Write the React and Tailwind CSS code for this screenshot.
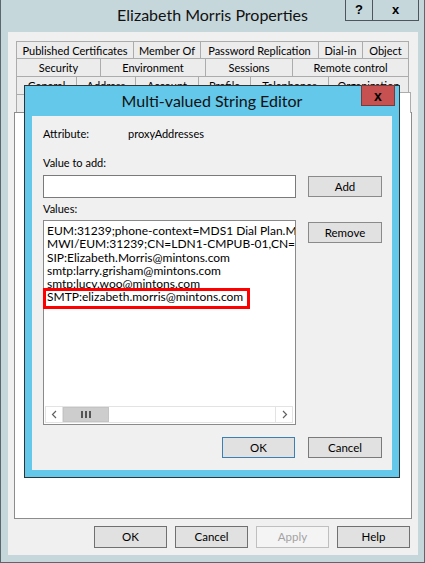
import React from 'react';

const tabRows = [
  {
    h: 'h-[17px]',
    tabs: [
      ['Published Certificates', 'w-[117px]'],
      ['Member Of', 'w-[67px]'],
      ['Password Replication', 'w-[118px]'],
      ['Dial-in', 'w-[44px]'],
      ['Object', 'w-[47px] border-r'],
    ],
  },
  {
    h: 'h-[18px]',
    tabs: [
      ['Security', 'w-[84px]'],
      ['Environment', 'w-[105px]'],
      ['Sessions', 'w-[87px]'],
      ['Remote control', 'w-[117px] border-r'],
    ],
  },
  {
    h: 'h-[18px]',
    tabs: [
      ['General', 'w-[60px]'],
      ['Address', 'w-[59px]'],
      ['Account', 'w-[63px]'],
      ['Profile', 'w-[52px]'],
      ['Telephones', 'w-[78px]'],
      ['Organization', 'w-[81px] border-r'],
    ],
  },
];

const values = [
  'EUM:31239;phone-context=MDS1 Dial Plan.Mintons.com',
  'MWI/EUM:31239;CN=LDN1-CMPUB-01,CN=UM IP Gateway Container',
  'SIP:Elizabeth.Morris@mintons.com',
  'smtp:larry.grisham@mintons.com',
  'smtp:lucy.woo@mintons.com',
];

const Btn = ({ children, className = '' }) => (
  <button
    type="button"
    className={`flex items-center justify-center border bg-[#e1e1e1] text-[11.5px] leading-none text-black ${className}`}
  >
    {children}
  </button>
);

const Chevron = ({ left }) => (
  <svg width="7" height="9" viewBox="0 0 7 9">
    <polyline
      points={left ? '5,1 1.5,4.5 5,8' : '2,1 5.5,4.5 2,8'}
      fill="none"
      stroke="#606060"
      strokeWidth="1.2"
    />
  </svg>
);

const Scrollbar = () => (
  <div className="ml-[1px] mr-[2px] mb-[1px] flex h-[17px] border border-[#e3e3e3] bg-white">
    <div className="flex w-[17px] items-center justify-center border-r border-[#e3e3e3]">
      <Chevron left />
    </div>
    <div className="flex w-[46px] items-center justify-center gap-[2px] border border-[#c4c4c4] bg-[#cdcdcd]">
      <span className="h-[7px] w-[2px] bg-[#555]" />
      <span className="h-[7px] w-[2px] bg-[#555]" />
      <span className="h-[7px] w-[2px] bg-[#555]" />
    </div>
    <div className="flex-1" />
    <div className="flex w-[17px] items-center justify-center border-l border-[#e3e3e3]">
      <Chevron />
    </div>
  </div>
);

const StringEditor = () => (
  <div className="absolute left-[23px] top-[85px] z-20 flex h-[393px] w-[376px] flex-col border border-[#2f3437] bg-[#64c8eb]">
    <div className="grid h-[30px] grid-cols-[1fr_auto_1fr]">
      <div />
      <div className="self-center pb-[1px] text-[16px] leading-none text-[#111]">Multi-valued String Editor</div>
      <div className="flex justify-end">
        <button
          type="button"
          className="-mt-[1px] mr-[4px] flex h-[21px] w-[34px] items-center justify-center border border-[#7a3a38] bg-[#c75050] font-['Liberation_Sans',sans-serif] text-[14px] font-bold leading-none text-black"
        >
          x
        </button>
      </div>
    </div>

    <div className="mx-[7px] flex h-[354px] flex-col bg-[#f0f0f0] pl-[11px] text-[11px] text-black">
      <div className="mt-[10px] flex h-[16px] items-center">
        <span className="w-[85px]">Attribute:</span>
        <span>proxyAddresses</span>
      </div>
      <div className="mt-[13px] flex h-[16px] items-center">Value to add:</div>
      <div className="mt-[4px] flex items-start">
        <div className="h-[23px] w-[253px] border border-[#7a7a7a] bg-white" />
        <Btn className="ml-[12px] mt-[1px] h-[21px] w-[74px] border-[#8a8a8a]">Add</Btn>
      </div>
      <div className="mt-[3px] flex h-[16px] items-center">Values:</div>
      <div className="mt-[3px] flex items-start">
        <div className="relative flex h-[205px] w-[253px] flex-col border border-[#8a8a8a] bg-white">
          <div className="flex-1 overflow-hidden pl-[3px] pt-[3px] text-[12px] leading-[13.3px] whitespace-nowrap">
            {values.map((v) => (
              <div key={v}>{v}</div>
            ))}
            <div>SMTP:elizabeth.morris@mintons.com</div>
          </div>
          <Scrollbar />
          <div className="pointer-events-none absolute -left-[1px] top-[67px] h-[21px] w-[207px] border-[3px] border-[#ff0000]" />
        </div>
        <Btn className="ml-[12px] mt-[2px] h-[21px] w-[74px] border-[#8a8a8a]">Remove</Btn>
      </div>
      <div className="mt-[12px] flex justify-end gap-[13px] pr-[10px]">
        <Btn className="h-[21px] w-[73px] border-[#3c7fb1]">OK</Btn>
        <Btn className="h-[21px] w-[74px] border-[#7a7a7a]">Cancel</Btn>
      </div>
    </div>
  </div>
);

export default function App() {
  return (
    <div className="relative flex h-[563px] w-[425px] flex-col border-x border-b border-[#5b666d] bg-[#c6d7dc] font-['Lato',sans-serif]">
      {/* title bar */}
      <div className="grid h-[32px] grid-cols-[1fr_auto_1fr]">
        <div />
        <div className="self-center pb-[2px] text-[16px] leading-none text-[#111]">Elizabeth Morris Properties</div>
        <div className="flex justify-end pr-[5px]">
          <div className="flex h-[21px] border-x border-b border-[#4c565c] font-['Liberation_Sans',sans-serif] text-[13px] font-bold text-black">
            <div className="flex w-[26px] items-center justify-center">?</div>
            <div className="flex w-[46px] items-center justify-center border-l border-[#4c565c]">x</div>
          </div>
        </div>
      </div>

      {/* client area */}
      <div className="ml-[7px] mr-[6px] flex h-[523px] flex-col bg-[#f0f0f0] pt-[9px] text-[11px] text-black">
        <div className="ml-[8px] flex flex-col">
          {tabRows.map((row, i) => (
            <div key={i} className={`flex ${row.h}`}>
              {row.tabs.map(([label, w]) => (
                <div
                  key={label}
                  className={`flex items-center justify-center whitespace-nowrap border-l border-t border-[#acacac] bg-[#ececec] leading-none ${w}`}
                >
                  {label}
                </div>
              ))}
            </div>
          ))}
          <div className="flex h-[18px] items-end">
            <div className="flex h-full w-[174px] items-center justify-center whitespace-nowrap border-l border-t border-[#acacac] bg-[#ececec]">
              Remote Desktop Services Profile
            </div>
            <div className="flex h-full w-[60px] items-center justify-center border-l border-t border-[#acacac] bg-[#ececec]">
              COM+
            </div>
            <div className="relative z-10 -ml-[2px] -mb-[1px] flex h-[21px] w-[163px] items-center justify-center self-end border-x border-t border-[#acacac] bg-white">
              Attribute Editor
            </div>
          </div>
        </div>

        <div className="ml-[6px] h-[407px] w-[398px] border border-[#8c8c8c] bg-white" />

        <div className="mt-[7px] flex justify-end gap-[8px] pr-[8px]">
          <Btn className="h-[22px] w-[73px] border-[#707070]">OK</Btn>
          <Btn className="h-[22px] w-[73px] border-[#707070]">Cancel</Btn>
          <Btn className="h-[22px] w-[73px] border-[#bfbfbf] !bg-[#f4f4f4] !text-[#a3a3a3]">Apply</Btn>
          <Btn className="h-[22px] w-[73px] border-[#707070]">Help</Btn>
        </div>
      </div>

      <StringEditor />
    </div>
  );
}
